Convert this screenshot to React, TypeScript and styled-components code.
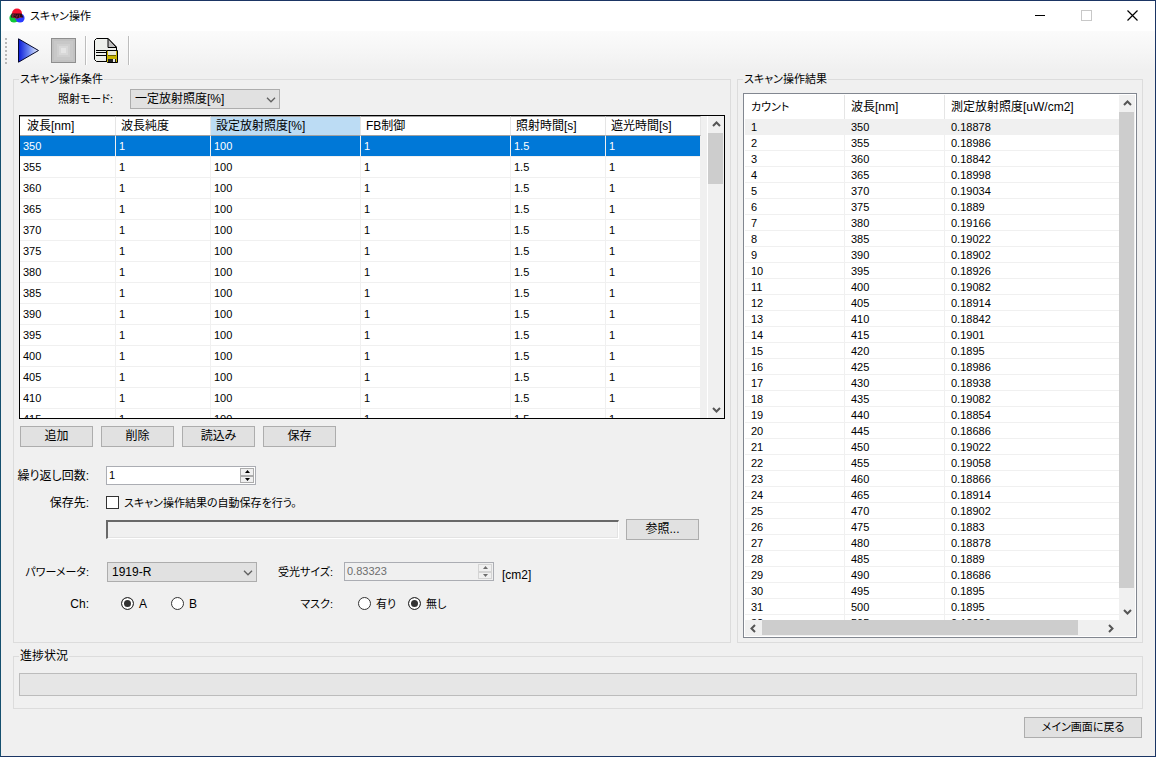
import React, { useState } from "react";
import styled, { createGlobalStyle } from "styled-components";

const GlobalStyle = createGlobalStyle`
  *, *::before, *::after { box-sizing: border-box; }
  body { margin: 0; background: #f0f0f0; }
  body, button, input, select {
    font-family: "Liberation Sans", "Noto Sans CJK JP", sans-serif;
    font-size: 12px;
    line-height: 12px;
    font-feature-settings: "palt";
    color: #000;
  }
`;

const textSize = { small: "11px", normal: "12px" };

const Window = styled.div`
  display: flex;
  flex-direction: column;
  min-height: 100vh;
  border: 1px solid #1b3564;
  border-left-color: #15506f;
  background: #f0f0f0;
`;

/* ---------- title bar ---------- */

const TitleBar = styled.header`
  display: flex;
  align-items: center;
  height: 30px;
  padding: 0 0 1px 8px;
  background: #fff;
`;

const Title = styled.h1`
  flex: 1;
  margin: 0 0 0 5px;
  font-size: ${textSize.small};
  font-weight: 400;
`;

const CaptionButton = styled.button`
  display: flex;
  align-items: center;
  justify-content: center;
  width: 46px;
  height: 29px;
  padding: 0;
  border: 0;
  background: transparent;
`;

/* ---------- tool bar ---------- */

const ToolBar = styled.div`
  display: flex;
  align-items: center;
  height: 39px;
  padding-left: 4px;
  background: linear-gradient(#fbfbfb, #f7f7f7 40%, #f0f0f0);
`;

const Grip = styled.span`
  width: 2px;
  height: 26px;
  margin-right: 4px;
  background: repeating-linear-gradient(#b8b8b8 0 2px, transparent 2px 4px);
`;

const ToolButton = styled.button`
  display: flex;
  align-items: center;
  justify-content: center;
  width: 35px;
  height: 36px;
  padding: 0;
  border: 0;
  background: transparent;
`;

const ToolSeparator = styled.span`
  width: 2px;
  height: 29px;
  margin: 0 2px 0 4px;
  border-left: 1px solid #bdbdbd;
  border-right: 1px solid #fff;
`;

/* ---------- page frame ---------- */

const Content = styled.main`
  display: flex;
  flex-direction: column;
  flex: 1;
  padding: 3px 12px 18px;
`;

const Panels = styled.div`
  display: grid;
  grid-template-columns: minmax(0, 718fr) minmax(0, 406fr);
  gap: 6px;
`;

const Group = styled.fieldset`
  display: flex;
  flex-direction: column;
  min-width: 0;
  margin: 0;
  padding: 4px 5px;
  border: 1px solid #dcdcdc;
`;

const ConditionGroup = styled(Group)`
  padding-bottom: 28px;
`;

const ResultGroup = styled(Group)`
  padding-top: 8px;
`;

const ProgressGroup = styled(Group)`
  margin-top: 7px;
  padding: 11px 5px 12px;
`;

const Legend = styled.legend<{ $small?: boolean }>`
  height: 12px;
  padding: 0 1px;
  font-size: ${(p) => (p.$small ? textSize.small : textSize.normal)};
`;

/* ---------- controls ---------- */

const PushButton = styled.button<{ $wide?: boolean }>`
  width: ${(p) => (p.$wide ? 118 : 73)}px;
  height: 21px;
  padding: 0 0 1px;
  border: 1px solid #adadad;
  background: #e1e1e1;
  font-size: ${(p) => (p.$wide ? textSize.small : textSize.normal)};
`;

const SelectBox = styled.div`
  position: relative;
  width: 150px;
`;

const Select = styled.select`
  display: block;
  width: 100%;
  height: 20px;
  padding: 0 20px 0 4px;
  border: 1px solid #adadad;
  border-radius: 0;
  background: #e1e1e1;
  line-height: 16px;
  appearance: none;
`;

const SelectArrow = styled.svg`
  position: absolute;
  top: 8px;
  right: 4px;
  pointer-events: none;
`;

const SpinBox = styled.div<{ $disabled?: boolean }>`
  display: flex;
  width: 150px;
  height: 19px;
  padding: 1px;
  border: 1px solid #abadb3;
  background: ${(p) => (p.$disabled ? "#f0f0f0" : "#fff")};
`;

const SpinInput = styled.input`
  flex: 1;
  min-width: 0;
  height: 13px;
  padding: 0 1px;
  border: 0;
  background: transparent;
  font-size: 11px;
  &:disabled { color: #6d6d6d; }
`;

const SpinButtons = styled.span`
  display: flex;
  flex-direction: column;
  width: 14px;
`;

const SpinButton = styled.button`
  display: flex;
  flex: 1;
  align-items: center;
  justify-content: center;
  min-height: 0;
  padding: 0;
  border: 1px solid #acacac;
  background: #f0f0f0;
  &:disabled { border-color: #d4d4d4; color: #6d6d6d; }
`;

const PathInput = styled.input`
  flex: 1;
  min-width: 0;
  height: 19px;
  padding: 0 2px;
  border-style: solid;
  border-color: #696969 #fff #fff #696969;
  border-width: 2px 1px 1px 2px;
  background: #f0f0f0;
  box-shadow: inset -1px -1px 0 #e3e3e3;
`;

const CheckInput = styled.input`
  width: 13px;
  height: 13px;
  margin: 0;
  border: 1px solid #333;
  background: #fff;
  appearance: none;
  &:checked { box-shadow: inset 0 0 0 2px #fff; background: #333; }
`;

const RadioInput = styled(CheckInput)`
  border-radius: 50%;
`;

const OptionLabel = styled.label<{ $small?: boolean }>`
  display: flex;
  align-items: center;
  gap: 5px;
  min-width: 50px;
  font-size: ${(p) => (p.$small ? textSize.small : textSize.normal)};
  white-space: nowrap;
`;

const RadioSet = styled.div`
  display: flex;
  width: 150px;
  padding-left: 14px;
`;

/* ---------- form rows ---------- */

const ModeRow = styled.div`
  display: flex;
  align-items: center;
  height: 20px;
`;

const ButtonRow = styled.div`
  display: flex;
  gap: 8px;
  margin: 7px 0 18px;
  padding-left: 1px;
`;

const FormRow = styled.div<{ $gap?: number }>`
  display: flex;
  align-items: center;
  height: 21px;
  margin-top: ${(p) => p.$gap ?? 0}px;
`;

const FormLabel = styled.label<{ $width: number; $after: number; $small?: boolean }>`
  display: flex;
  justify-content: flex-end;
  width: ${(p) => p.$width}px;
  margin-right: ${(p) => p.$after}px;
  font-size: ${(p) => (p.$small ? textSize.small : textSize.normal)};
  white-space: nowrap;
`;

const Unit = styled.span`
  margin-left: 8px;
  padding-top: 6px;
`;

const Browse = styled.div`
  display: flex;
  flex: 1;
  align-items: center;
  gap: 7px;
  padding-right: 26px;
`;

/* ---------- scroll bars ---------- */

const Bar = styled.div<{ $horizontal?: boolean }>`
  display: flex;
  flex-direction: ${(p) => (p.$horizontal ? "row" : "column")};
  flex: none;
  background: #f0f0f0;
  ${(p) => (p.$horizontal ? "height: 16px;" : "width: 16px;")}
`;

const BarButton = styled.button`
  display: flex;
  flex: 0 0 17px;
  align-items: center;
  justify-content: center;
  padding: 0;
  border: 0;
  background: transparent;
`;

const Track = styled.div`
  flex: 1;
  min-height: 0;
`;

const Thumb = styled.div<{ $horizontal?: boolean; $size: number }>`
  background: #cdcdcd;
  ${(p) =>
    p.$horizontal
      ? `width: ${p.$size}%; height: 15px;`
      : `height: ${p.$size}%; width: 15px;`}
`;

const arrows = {
  up: "M1 6 L4.5 2.5 L8 6",
  down: "M1 3 L4.5 6.5 L8 3",
  left: "M6 1 L2.5 4.5 L6 8",
  right: "M3 1 L6.5 4.5 L3 8",
};

function Arrow({ to }: { to: keyof typeof arrows }) {
  return (
    <svg width="9" height="9" viewBox="0 0 9 9">
      <path d={arrows[to]} fill="none" stroke="#555" strokeWidth="2" />
    </svg>
  );
}

function ScrollBar({ horizontal, size }: { horizontal?: boolean; size: number }) {
  return (
    <Bar $horizontal={horizontal}>
      <BarButton type="button" aria-label={horizontal ? "左へ" : "上へ"}>
        <Arrow to={horizontal ? "left" : "up"} />
      </BarButton>
      <Track>
        <Thumb $horizontal={horizontal} $size={size} />
      </Track>
      <BarButton type="button" aria-label={horizontal ? "右へ" : "下へ"}>
        <Arrow to={horizontal ? "right" : "down"} />
      </BarButton>
    </Bar>
  );
}

/* ---------- condition grid ---------- */

const GridFrame = styled.div`
  display: flex;
  height: 304px;
  margin-top: 6px;
  border: 1px solid #000;
`;

const GridView = styled.div`
  flex: 1;
  min-width: 0;
  overflow: hidden;
  border-right: 1px solid #fff;
  background: #f0f0f0;
`;

const GridTable = styled.table`
  width: 681px;
  border-spacing: 0;
  table-layout: fixed;
  background: #fff;
`;

const GridHead = styled.th<{ $active?: boolean }>`
  height: 20px;
  padding: 0 0 0 5px;
  border-top: 1px solid #a0a0a0;
  border-bottom: 1px solid #a0a0a0;
  border-right: 1px solid #e5e5e5;
  background: ${(p) => (p.$active ? "#bcdcf4" : "#fff")};
  font-size: 12px;
  font-weight: 400;
  line-height: 12px;
  text-align: left;
  white-space: nowrap;
  &:first-child { padding-left: 7px; }
`;

const GridRow = styled.tr<{ $selected?: boolean }>`
  background: ${(p) => (p.$selected ? "#0078d7" : "#fff")};
  color: ${(p) => (p.$selected ? "#fff" : "#000")};
`;

const GridCell = styled.td`
  height: 21px;
  padding: 0 0 1px 3px;
  border-right: 1px solid #f0f0f0;
  border-bottom: 1px solid #f0f0f0;
  font-size: 11px;
  line-height: 12px;
`;

/* ---------- result list ---------- */

const ListFrame = styled.div`
  display: flex;
  flex: 1 1 0px;
  flex-direction: column;
  min-height: 0;
  padding: 1px;
  border: 1px solid #828790;
  background: #fff;
`;

const ListBody = styled.div`
  display: flex;
  flex: 1 1 0px;
  min-height: 0;
`;

const ListView = styled.div`
  flex: 1;
  min-width: 0;
  overflow: hidden;
`;

const ListFoot = styled.div`
  padding-right: 16px;
  background: #f0f0f0;
`;

const ListTable = styled.table`
  width: 100%;
  border-spacing: 0;
  table-layout: fixed;
`;

const ListHead = styled.th`
  height: 24px;
  padding: 0 0 0 6px;
  border-right: 1px solid #e5e5e5;
  font-size: 12px;
  font-weight: 400;
  line-height: 12px;
  text-align: left;
  white-space: nowrap;
  &:first-child { font-size: ${textSize.small}; }
  &:last-child { border-right: 0; }
`;

const ListRow = styled.tr<{ $selected?: boolean }>`
  background: ${(p) => (p.$selected ? "#f0f0f0" : "#fff")};
`;

const ListCell = styled.td`
  height: 16px;
  padding: 0 0 0 6px;
  border-right: 1px solid #f0f0f0;
  border-bottom: 1px solid #f0f0f0;
  font-size: 11px;
  line-height: 12px;
  &:last-child { border-right: 0; }
`;

const ProgressBar = styled.div`
  height: 23px;
  border: 1px solid #bcbcbc;
  background: #e6e6e6;
`;

const Footer = styled.div`
  display: flex;
  justify-content: flex-end;
  margin-top: 8px;
  padding-right: 1px;
`;

/* ---------- drawings ---------- */

const AppIcon = () => (
  <svg width="16" height="16" viewBox="0 0 16 16" aria-hidden="true">
    <circle cx="5" cy="10" r="4.6" fill="#10c838" />
    <circle cx="11" cy="10" r="4.6" fill="#2a3cff" />
    <circle cx="8" cy="5.6" r="5" fill="#f5122e" />
    <path d="M2.5 5.5h10l2 4h-4L8 10.5 6 9.5H2z" fill="#2a0a14" />
    <path d="M3.5 9.5V6.5h1.6v1.6H3.5M6.5 6.5l1.2 3 1.2-3M10.5 6.5v3h2" fill="none" stroke="#a03048" strokeWidth="0.6" />
  </svg>
);

const PlayIcon = () => (
  <svg width="23" height="25" viewBox="0 0 23 25" aria-hidden="true">
    <defs>
      <linearGradient id="play">
        <stop offset="0" stopColor="#0a1ad8" />
        <stop offset="0.5" stopColor="#6a84f0" />
        <stop offset="1" stopColor="#f0f6ff" />
      </linearGradient>
    </defs>
    <path d="M1.5 0.8 L21.5 12.5 L1.5 24.2 Z" fill="url(#play)" stroke="#05082c" strokeWidth="1" />
  </svg>
);

const StopIcon = () => (
  <svg width="25" height="25" viewBox="0 0 25 25" aria-hidden="true">
    <rect x="0.5" y="0.5" width="24" height="24" fill="#c2c2c2" stroke="#8e8e8e" />
    <rect x="3" y="3" width="19" height="19" fill="#c8c8c8" />
    <rect x="6" y="6" width="13" height="13" fill="#cfcfcf" />
    <rect x="8" y="8" width="9" height="9" fill="#d8d8d8" />
    <rect x="10" y="10" width="5" height="5" fill="#e4e4e4" />
  </svg>
);

const SaveIcon = () => (
  <svg width="25" height="26" viewBox="0 0 25 26" aria-hidden="true">
    <path d="M2.5 0.5H14L22.5 9V23.5H2.5L0.5 21.5V2.5Z" fill="#eef0ec" stroke="#000" />
    <path d="M14 0.5V9.5H22.5Z" fill="#c0c0c0" stroke="#000" />
    <path d="M2 12.5H12M2 14.5H12M2 17.5H12" stroke="#000" />
    <path d="M12.5 12.5H23.5V24.5H13.5L12.5 23.5Z" fill="#c8b400" stroke="#000" />
    <rect x="14" y="13" width="8" height="4" fill="#e9e7d8" />
    <path d="M14 17.5H22" stroke="#6a5f00" />
    <rect x="14" y="21" width="8" height="3" fill="#222" />
    <rect x="19" y="21" width="2" height="3" fill="#e8e8e8" />
  </svg>
);

const Chevron = () => (
  <SelectArrow width="10" height="6" viewBox="0 0 10 6" aria-hidden="true">
    <path d="M1 0.8L5 4.8L9 0.8" fill="none" stroke="#606060" strokeWidth="1.3" />
  </SelectArrow>
);

function SpinArrows({ disabled }: { disabled?: boolean }) {
  return (
    <SpinButtons>
      <SpinButton type="button" disabled={disabled} aria-label="増やす">
        <svg width="5" height="3" viewBox="0 0 5 3"><path d="M0 3L2.5 0L5 3Z" fill="currentColor" /></svg>
      </SpinButton>
      <SpinButton type="button" disabled={disabled} aria-label="減らす">
        <svg width="5" height="3" viewBox="0 0 5 3"><path d="M0 0L2.5 3L5 0Z" fill="currentColor" /></svg>
      </SpinButton>
    </SpinButtons>
  );
}

/* ---------- data ---------- */

const conditionColumns = [
  { name: "波長[nm]", width: 96 },
  { name: "波長純度", width: 95 },
  { name: "設定放射照度[%]", width: 150 },
  { name: "FB制御", width: 150 },
  { name: "照射時間[s]", width: 95 },
  { name: "遮光時間[s]", width: 95 },
];

const conditions = Array.from({ length: 14 }, (_, i) => [
  String(350 + i * 5), "1", "100", "1", "1.5", "1",
]);

const measured = [
  "0.18878", "0.18986", "0.18842", "0.18998", "0.19034", "0.1889", "0.19166", "0.19022",
  "0.18902", "0.18926", "0.19082", "0.18914", "0.18842", "0.1901", "0.1895", "0.18986",
  "0.18938", "0.19082", "0.18854", "0.18686", "0.19022", "0.19058", "0.18866", "0.18914",
  "0.18902", "0.1883", "0.18878", "0.1889", "0.18686", "0.1895", "0.1895", "0.18926",
];

export default function App() {
  const [repeat, setRepeat] = useState("1");
  const [autoSave, setAutoSave] = useState(false);
  const [channel, setChannel] = useState("A");
  const [mask, setMask] = useState("無し");

  return (
    <Window>
      <GlobalStyle />
      <TitleBar>
        <AppIcon />
        <Title>スキャン操作</Title>
        <CaptionButton type="button" aria-label="最小化">
          <svg width="11" height="11"><path d="M0 5.5H10" stroke="#000" /></svg>
        </CaptionButton>
        <CaptionButton type="button" aria-label="最大化" disabled>
          <svg width="11" height="11"><rect x="0.5" y="0.5" width="10" height="10" fill="none" stroke="#c8c8c8" /></svg>
        </CaptionButton>
        <CaptionButton type="button" aria-label="閉じる">
          <svg width="11" height="11"><path d="M0.5 0.5L10.5 10.5M10.5 0.5L0.5 10.5" stroke="#000" strokeWidth="1.2" /></svg>
        </CaptionButton>
      </TitleBar>

      <ToolBar role="toolbar">
        <Grip />
        <ToolButton type="button" aria-label="開始"><PlayIcon /></ToolButton>
        <ToolButton type="button" aria-label="停止"><StopIcon /></ToolButton>
        <ToolSeparator />
        <ToolButton type="button" aria-label="結果の保存"><SaveIcon /></ToolButton>
        <ToolSeparator />
      </ToolBar>

      <Content>
        <Panels>
          <ConditionGroup>
            <Legend $small>スキャン操作条件</Legend>
            <ModeRow>
              <FormLabel htmlFor="mode" $width={94} $after={17} $small>照射モード:</FormLabel>
              <SelectBox>
                <Select id="mode"><option>一定放射照度[%]</option></Select>
                <Chevron />
              </SelectBox>
            </ModeRow>

            <GridFrame>
              <GridView>
                <GridTable>
                  <colgroup>
                    {conditionColumns.map((c) => <col key={c.name} width={c.width} />)}
                  </colgroup>
                  <thead>
                    <tr>
                      {conditionColumns.map((c, i) => (
                        <GridHead key={c.name} scope="col" $active={i === 2}>{c.name}</GridHead>
                      ))}
                    </tr>
                  </thead>
                  <tbody>
                    {conditions.map((row, i) => (
                      <GridRow key={row[0]} $selected={i === 0}>
                        {row.map((v, j) => <GridCell key={j}>{v}</GridCell>)}
                      </GridRow>
                    ))}
                  </tbody>
                </GridTable>
              </GridView>
              <ScrollBar size={19} />
            </GridFrame>

            <ButtonRow>
              <PushButton type="button">追加</PushButton>
              <PushButton type="button">削除</PushButton>
              <PushButton type="button">読込み</PushButton>
              <PushButton type="button">保存</PushButton>
            </ButtonRow>

            <FormRow>
              <FormLabel htmlFor="repeat" $width={70} $after={17}>繰り返し回数:</FormLabel>
              <SpinBox>
                <SpinInput id="repeat" value={repeat} onChange={(e) => setRepeat(e.target.value)} />
                <SpinArrows />
              </SpinBox>
            </FormRow>
            <FormRow $gap={6}>
              <FormLabel htmlFor="path" $width={70} $after={17}>保存先:</FormLabel>
              <OptionLabel $small>
                <CheckInput type="checkbox" checked={autoSave} onChange={(e) => setAutoSave(e.target.checked)} />
                スキャン操作結果の自動保存を行う。
              </OptionLabel>
            </FormRow>
            <FormRow $gap={6}>
              <FormLabel as="span" $width={70} $after={17} />
              <Browse>
                <PathInput id="path" readOnly />
                <PushButton type="button">参照...</PushButton>
              </Browse>
            </FormRow>
            <FormRow $gap={21}>
              <FormLabel htmlFor="meter" $width={70} $after={18} $small>パワーメータ:</FormLabel>
              <SelectBox>
                <Select id="meter"><option>1919-R</option></Select>
                <Chevron />
              </SelectBox>
              <FormLabel htmlFor="size" $width={76} $after={11} $small>受光サイズ:</FormLabel>
              <SpinBox $disabled>
                <SpinInput id="size" value="0.83323" disabled readOnly />
                <SpinArrows disabled />
              </SpinBox>
              <Unit>[cm2]</Unit>
            </FormRow>
            <FormRow $gap={11}>
              <FormLabel as="span" $width={70} $after={18}>Ch:</FormLabel>
              <RadioSet role="radiogroup" aria-label="Ch">
                {["A", "B"].map((v) => (
                  <OptionLabel key={v}>
                    <RadioInput type="radio" name="ch" checked={channel === v} onChange={() => setChannel(v)} />
                    {v}
                  </OptionLabel>
                ))}
              </RadioSet>
              <FormLabel as="span" $width={76} $after={11} $small>マスク:</FormLabel>
              <RadioSet role="radiogroup" aria-label="マスク">
                {["有り", "無し"].map((v) => (
                  <OptionLabel key={v} $small>
                    <RadioInput type="radio" name="mask" checked={mask === v} onChange={() => setMask(v)} />
                    {v}
                  </OptionLabel>
                ))}
              </RadioSet>
            </FormRow>
          </ConditionGroup>

          <ResultGroup>
            <Legend $small>スキャン操作結果</Legend>
            <ListFrame>
              <ListBody>
                <ListView>
                  <ListTable>
                    <colgroup>
                      <col width="100" />
                      <col width="100" />
                      <col />
                    </colgroup>
                    <thead>
                      <tr>
                        <ListHead scope="col">カウント</ListHead>
                        <ListHead scope="col">波長[nm]</ListHead>
                        <ListHead scope="col">測定放射照度[uW/cm2]</ListHead>
                      </tr>
                    </thead>
                    <tbody>
                      {measured.map((v, i) => (
                        <ListRow key={i} $selected={i === 0}>
                          <ListCell>{i + 1}</ListCell>
                          <ListCell>{350 + i * 5}</ListCell>
                          <ListCell>{v}</ListCell>
                        </ListRow>
                      ))}
                    </tbody>
                  </ListTable>
                </ListView>
                <ScrollBar size={97} />
              </ListBody>
              <ListFoot>
                <ScrollBar horizontal size={93} />
              </ListFoot>
            </ListFrame>
          </ResultGroup>
        </Panels>

        <ProgressGroup>
          <Legend>進捗状況</Legend>
          <ProgressBar role="progressbar" aria-label="進捗状況" aria-valuenow={0} aria-valuemin={0} aria-valuemax={100} />
        </ProgressGroup>

        <Footer>
          <PushButton type="button" $wide>メイン画面に戻る</PushButton>
        </Footer>
      </Content>
    </Window>
  );
}
